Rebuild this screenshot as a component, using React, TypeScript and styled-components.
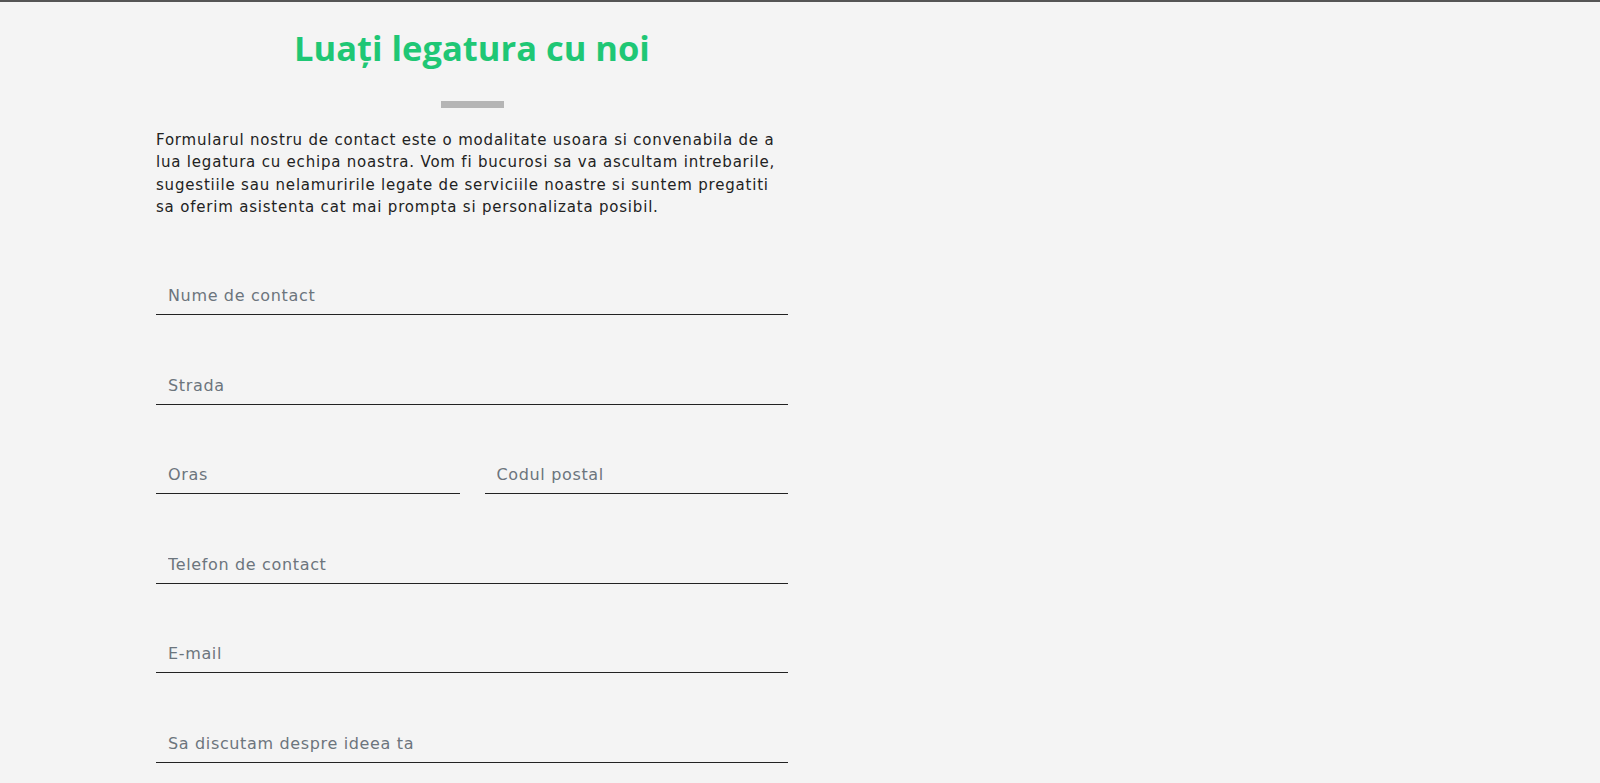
import React from "react";
import styled, { createGlobalStyle } from "styled-components";

const GlobalStyle = createGlobalStyle`
  html, body {
    margin: 0;
    padding: 0;
    background: #f4f4f4;
  }
  body {
    font-family: "DejaVu Sans", "Open Sans", sans-serif;
    color: #222;
  }
  * { box-sizing: border-box; }
`;

const Page = styled.div`
  min-height: 783px;
  border-top: 2px solid #555;
  padding: 23.5px 0 0 156px;
`;

const Column = styled.section`
  width: 632px;
  display: flex;
  flex-direction: column;
  align-items: stretch;
`;

const Title = styled.h1`
  margin: 0;
  text-align: center;
  font-family: "Open Sans", sans-serif;
  font-weight: 700;
  font-size: 34.5px;
  line-height: 44px;
  color: #1fc775;
`;

const Divider = styled.div`
  align-self: center;
  width: 63px;
  height: 7px;
  margin-top: 31.5px;
  background: #b5b5b5;
`;

const Intro = styled.p`
  margin: 20.5px 0 0;
  font-family: "DejaVu Sans", sans-serif;
  font-size: 15px;
  line-height: 22.5px;
  letter-spacing: 0.8px;
  color: #222;
`;

const Form = styled.form`
  margin-top: 58.6px;
  display: flex;
  flex-direction: column;
  gap: 51.6px;
`;

const Row = styled.div`
  display: grid;
  grid-template-columns: 1fr 1fr;
  column-gap: 25px;
`;

const Field = styled.input`
  display: block;
  width: 100%;
  height: 38px;
  padding: 6px 12px;
  font-family: "DejaVu Sans", sans-serif;
  font-size: 16px;
  line-height: 24px;
  letter-spacing: 0.65px;
  color: #222;
  background: transparent;
  border: none;
  border-bottom: 1px solid #222;
  border-radius: 0;
  outline: none;
  &::placeholder {
    color: #6c757d;
    opacity: 1;
  }
`;

export default function App() {
  return (
    <>
      <GlobalStyle />
      <Page>
        <Column>
          <Title>Luați legatura cu noi</Title>
          <Divider />
          <Intro>
            Formularul nostru de contact este o modalitate usoara si convenabila de a lua
            legatura cu echipa noastra. Vom fi bucurosi sa va ascultam intrebarile, sugestiile
            sau nelamuririle legate de serviciile noastre si suntem pregatiti sa oferim
            asistenta cat mai prompta si personalizata posibil.
          </Intro>
          <Form onSubmit={(e) => e.preventDefault()}>
            <Field type="text" placeholder="Nume de contact" />
            <Field type="text" placeholder="Strada" />
            <Row>
              <Field type="text" placeholder="Oras" />
              <Field type="text" placeholder="Codul postal" />
            </Row>
            <Field type="tel" placeholder="Telefon de contact" />
            <Field type="email" placeholder="E-mail" />
            <Field type="text" placeholder="Sa discutam despre ideea ta" />
          </Form>
        </Column>
      </Page>
    </>
  );
}
